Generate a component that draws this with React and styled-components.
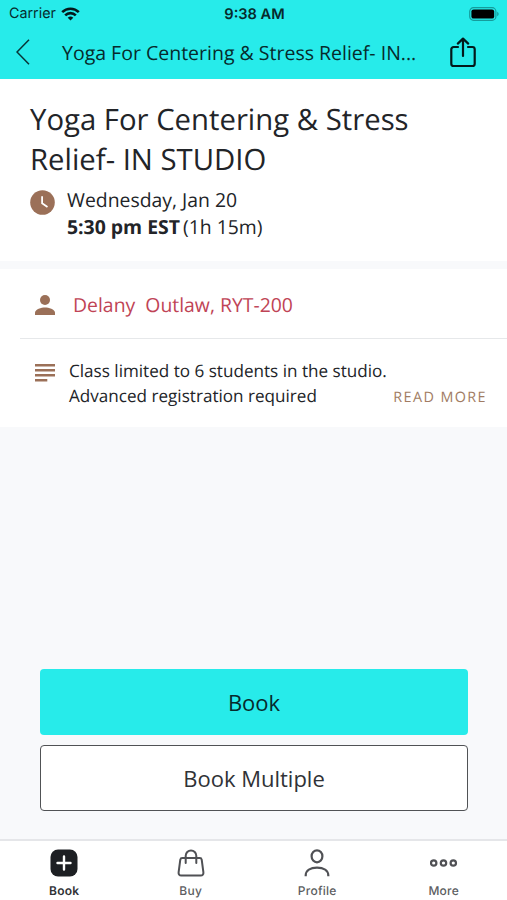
import styled, { createGlobalStyle } from 'styled-components'

export default function App(){
    return(
        <Screen>
            <GlobalStyle />
            <TopBar>
                <StatusBar>
                    <Carrier>
                        <span>Carrier</span>
                        <WifiIcon />
                    </Carrier>
                    <Clock>9:38 AM</Clock>
                    <BatteryIcon />
                </StatusBar>
                <NavBar>
                    <IconButton aria-label="Back"><BackIcon /></IconButton>
                    <NavTitle>Yoga For Centering &amp; Stress Relief- IN...</NavTitle>
                    <IconButton aria-label="Share"><ShareIcon /></IconButton>
                </NavBar>
            </TopBar>

            <Summary>
                <Title>Yoga For Centering &amp; Stress Relief- IN STUDIO</Title>
                <When>
                    <ClockIcon />
                    <div>
                        <p>Wednesday, Jan 20</p>
                        <p><b>5:30 pm EST</b><span>(1h 15m)</span></p>
                    </div>
                </When>
            </Summary>

            <Details>
                <TeacherRow>
                    <PersonIcon />
                    <Teacher>Delany&nbsp; Outlaw, RYT-200</Teacher>
                </TeacherRow>
                <NotesRow>
                    <NotesIcon />
                    <Notes>
                        <p>Class limited to 6 students in the studio.</p>
                        <p>Advanced registration required</p>
                    </Notes>
                    <ReadMore>READ MORE</ReadMore>
                </NotesRow>
            </Details>

            <Actions>
                <Button $primary>Book</Button>
                <Button>Book Multiple</Button>
            </Actions>

            <TabBar>
                <Tab $active><BookIcon /><span>Book</span></Tab>
                <Tab><BagIcon /><span>Buy</span></Tab>
                <Tab><ProfileIcon /><span>Profile</span></Tab>
                <Tab><MoreIcon /><span>More</span></Tab>
            </TabBar>
        </Screen>
    )
}

function WifiIcon(){
    return(
        <svg width="19" height="14" viewBox="0 0 19 14" fill="none" stroke="#03191b" strokeWidth="2.6">
            <path d="M1.2 5.2a11.8 11.8 0 0 1 16.6 0" />
            <path d="M4.2 8.3a7.5 7.5 0 0 1 10.6 0" />
            <path d="M9.5 13.6 6.7 10.8a4 4 0 0 1 5.6 0z" fill="#03191b" stroke="none" />
        </svg>
    )
}

function BatteryIcon(){
    return(
        <svg width="31" height="14" viewBox="0 0 31 14">
            <rect x="0.7" y="0.7" width="26.2" height="12.6" rx="3.8" fill="none" stroke="#159c9c" strokeWidth="1.2" />
            <rect x="2.4" y="2.4" width="22.8" height="9.2" rx="2.2" fill="#000" />
            <path d="M28.2 4.8c2 .8 2 3.6 0 4.4z" fill="#159c9c" />
        </svg>
    )
}

function BackIcon(){
    return(
        <svg width="14" height="26" viewBox="0 0 14 26" fill="none" stroke="#083436" strokeWidth="1.5">
            <path d="M13 .8 1 13l12 12.2" />
        </svg>
    )
}

function ShareIcon(){
    return(
        <svg width="26" height="31" viewBox="0 0 26 31" fill="none" stroke="#03191b" strokeWidth="2.2" strokeLinecap="round" strokeLinejoin="round">
            <path d="M8 10H3.6A2.3 2.3 0 0 0 1.3 12.3v14.4A2.3 2.3 0 0 0 3.6 29h18.8a2.3 2.3 0 0 0 2.3-2.3V12.3A2.3 2.3 0 0 0 22.4 10H18" />
            <path d="M13 19V2M7.8 6.6 13 1.6l5.2 5" />
        </svg>
    )
}

function ClockIcon(){
    return(
        <svg width="25" height="25" viewBox="0 0 25 25">
            <circle cx="12.5" cy="12.5" r="12.3" fill="#9b7058" />
            <path d="M12.1 6.2v7.1l5.4 3.6" fill="none" stroke="#fff" strokeWidth="1.8" />
        </svg>
    )
}

function PersonIcon(){
    return(
        <svg width="20" height="20" viewBox="0 0 20 20" fill="#9b7058">
            <circle cx="10" cy="5" r="5" />
            <path d="M0 20v-2.4C0 14.2 6.4 12.4 10 12.4s10 1.8 10 5.2V20z" />
        </svg>
    )
}

function NotesIcon(){
    return(
        <svg width="20" height="18" viewBox="0 0 20 18" fill="#9b7058">
            <path d="M0 0h20v2.4H0zM0 5h20v2.4H0zM0 10h20v2.4H0zM0 15h12.3v2.4H0z" />
        </svg>
    )
}

function BookIcon(){
    return(
        <svg width="28" height="28" viewBox="0 0 28 28">
            <rect x="0.5" y="0.5" width="27" height="27" rx="7.5" fill="#1d1f23" />
            <path d="M14 7.5v13M7.5 14h13" stroke="#fff" strokeWidth="2.4" strokeLinecap="round" />
        </svg>
    )
}

function BagIcon(){
    return(
        <svg width="28" height="28" viewBox="0 0 28 28" fill="none" stroke="#505155" strokeWidth="2" strokeLinecap="round" strokeLinejoin="round">
            <path d="M5.2 9h17.6c1 0 1.7.6 1.9 1.6l1.7 12.7c.2 1.8-.8 3.1-2.6 3.1H4.2c-1.8 0-2.8-1.3-2.6-3.1l1.7-12.7C3.5 9.6 4.2 9 5.2 9z" />
            <path d="M8.7 14V6.7a5.3 5.3 0 0 1 10.6 0V14" />
        </svg>
    )
}

function ProfileIcon(){
    return(
        <svg width="28" height="28" viewBox="0 0 28 28" fill="none" stroke="#505155" strokeWidth="2.2">
            <ellipse cx="14" cy="7.3" rx="5.4" ry="6" />
            <path d="M2.7 27.3v-.8c0-5.2 4.8-7.9 11.300-7.9s11.300 2.7 11.300 7.9v.8" />
        </svg>
    )
}

function MoreIcon(){
    return(
        <svg width="28" height="28" viewBox="0 0 28 28" fill="none" stroke="#505155" strokeWidth="2.2">
            <circle cx="3.7" cy="14" r="2.7" />
            <circle cx="13.5" cy="14" r="2.7" />
            <circle cx="23.3" cy="14" r="2.7" />
        </svg>
    )
}

const GlobalStyle = createGlobalStyle`

    *{
        box-sizing: border-box;
        margin: 0;
        padding: 0;
    }

    body{
        background: #f8f9fb;
        font-family: 'Open Sans', 'Noto Sans', sans-serif;
        color: #222428;
        text-rendering: geometricPrecision;
    }

    svg{
        display: block;
        flex-shrink: 0;
    }

    button{
        font-family: inherit;
        border: none;
        background: none;
    }

`

const Screen = styled.div`

    display: flex;
    flex-direction: column;
    height: 900px;
    background: #f8f9fb;
    overflow: hidden;

`

const TopBar = styled.header`

    height: 79px;
    background: #27ebea;
    color: #062a2c;

`

const StatusBar = styled.div`

    display: grid;
    grid-template-columns: 1fr auto 1fr;
    align-items: center;
    height: 27px;
    padding: 0 7px 0 9px;
    font-family: Inter, 'Liberation Sans', sans-serif;
    font-size: 14.6px;

    > svg{
        justify-self: end;
    }

`

const Carrier = styled.div`

    display: flex;
    align-items: center;
    gap: 5px;
    font-size: 14.3px;

`

const Clock = styled.div`

    font-weight: 600;

`

const NavBar = styled.nav`

    display: flex;
    align-items: center;
    height: 50px;
    padding: 0 31px 0 16px;

`

const IconButton = styled.button`

    flex-shrink: 0;

`

const NavTitle = styled.h2`

    flex: 1;
    margin-left: 32px;
    font-size: 19.5px;
    font-weight: 400;
    white-space: nowrap;

`

const Summary = styled.section`

    height: 182px;
    padding: 20px 60px 0 30px;
    background: #fff;

`

const Title = styled.h1`

    font-size: 29.3px;
    font-weight: 400;
    line-height: 40px;

`

const When = styled.div`

    display: flex;
    gap: 12px;
    margin-top: 7px;
    font-size: 19.4px;
    line-height: 27px;

    svg{
        margin-top: 4px;
    }

    span{
        margin-left: 3px;
    }

`

const Details = styled.section`

    margin-top: 8px;
    height: 158px;
    background: #fff;

`

const TeacherRow = styled.div`

    display: flex;
    align-items: center;
    gap: 18px;
    height: 70px;
    margin-left: 20px;
    padding: 2px 0 0 15px;
    border-bottom: 1px solid #e6e8ea;

`

const Teacher = styled.a`

    font-size: 19.4px;
    color: #bf4456;

`

const NotesRow = styled.div`

    display: flex;
    padding: 21px 20px 0 35px;

    svg{
        margin-top: 4px;
    }

`

const Notes = styled.div`

    flex: 1;
    margin-left: 14px;
    font-size: 17.1px;
    line-height: 24.6px;
    white-space: nowrap;
    width: 0;

`

const ReadMore = styled.a`

    align-self: flex-end;
    font-size: 14.4px;
    line-height: 23px;
    letter-spacing: 1.4px;
    color: #a17c63;

`

const Actions = styled.section`

    display: flex;
    flex-direction: column;
    gap: 10px;
    margin: auto 39px 28px 40px;

`

const Button = styled.button`

    height: 66px;
    border: ${props => props.$primary ? 'none' : '1.5px solid #505255'};
    border-radius: 4px;
    background: ${props => props.$primary ? '#27ebea' : '#fff'};
    color: ${props => props.$primary ? '#062a2c' : '#303236'};
    font-size: 22px;

`

const TabBar = styled.nav`

    display: grid;
    grid-template-columns: repeat(4, 1fr);
    height: 61px;
    border-top: 2px solid #e5e6e9;
    background: #fff;
    padding-left: 1px;

`

const Tab = styled.a`

    display: flex;
    flex-direction: column;
    align-items: center;
    gap: 5px;
    padding-top: 8px;
    font-family: Inter, 'Liberation Sans', sans-serif;
    font-size: 12px;
    line-height: 17px;
    letter-spacing: 0.25px;
    font-weight: ${props => props.$active ? 600 : 500};
    color: ${props => props.$active ? '#303236' : '#5c5d61'};

`
